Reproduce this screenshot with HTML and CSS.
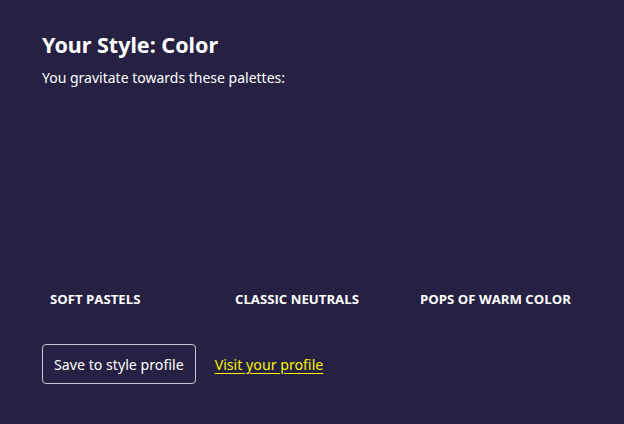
FILE: index.html
```html
<!DOCTYPE html>
<html>
<head>
<meta charset="utf-8">
<link rel="stylesheet" href="styles.css">
</head>
<body>
<main class="page">
  <h1 class="title">Your Style: Color</h1>
  <p class="subtitle">You gravitate towards these palettes:</p>
  <div class="palettes">
    <div class="palette"><div class="swatch"></div><div class="label">SOFT PASTELS</div></div>
    <div class="palette"><div class="swatch"></div><div class="label">CLASSIC NEUTRALS</div></div>
    <div class="palette"><div class="swatch"></div><div class="label">POPS OF WARM COLOR</div></div>
  </div>
  <div class="actions">
    <button class="btn">Save to style profile</button>
    <a class="link" href="#">Visit your profile</a>
  </div>
</main>
</body>
</html>
```
FILE: styles.css
```css
html, body {
  margin: 0;
  padding: 0;
  background: #262142;
  height: 100%;
}
body {
  font-family: "Noto Sans", "Open Sans", sans-serif;
  color: #ffffff;
}
.page {
  padding: 30px 42px 0 42px;
}
.title {
  margin: 0;
  font-size: 21.5px;
  font-weight: 700;
  line-height: 30px;
}
.subtitle {
  margin: 8px 0 0 0;
  font-size: 14px;
  line-height: 20px;
}
.palettes {
  display: grid;
  grid-template-columns: repeat(3, 185px);
  margin-top: 8px;
}
.palette {
  padding: 0 8px;
}
.swatch {
  height: 194px;
}
.label {
  font-family: "Open Sans", sans-serif;
  font-weight: 700;
  font-size: 13.2px;
  line-height: 18px;
}
.actions {
  display: flex;
  align-items: center;
  gap: 19px;
  margin-top: 36px;
}
.btn {
  font-family: "Noto Sans", "Open Sans", sans-serif;
  font-size: 14.2px;
  color: #ffffff;
  background: transparent;
  border: 1px solid #c8c6d0;
  border-radius: 4px;
  height: 40px;
  padding: 0 11px;
}
.link {
  color: #f7f200;
  font-size: 14.2px;
  text-decoration: underline;
  text-underline-offset: 3px;
}
```
